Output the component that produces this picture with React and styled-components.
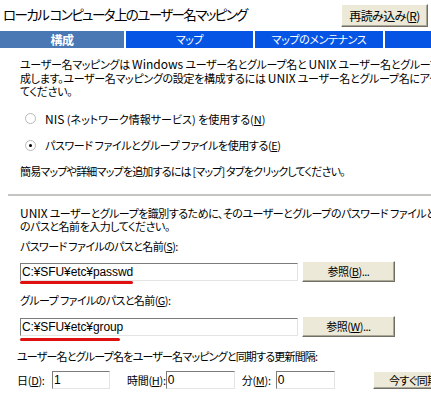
import React from "react";
import styled, { createGlobalStyle } from "styled-components";

const Global = createGlobalStyle`
  html, body { margin: 0; padding: 0; background: #fff; overflow: hidden; }
  body {
    font-family: "Noto Sans CJK JP", "Noto Sans", sans-serif;
    font-size: 11px;
    color: #000;
    font-feature-settings: "palt";
  }
  u { text-decoration: underline; text-underline-offset: 1px; }
`;

const Page = styled.div`
  width: 431px;
  height: 395px;
  overflow: hidden;
`;

const Header = styled.div`
  display: flex;
  align-items: center;
  justify-content: space-between;
  height: 31px;
  padding: 0 3px 0 3px;
  box-sizing: border-box;
`;

const Title = styled.div`
  font-size: 13.5px;
  line-height: 18px;
  letter-spacing: -1.6px;
  white-space: nowrap;
  margin-top: -3px;
`;

const Button = styled.button`
  font-family: inherit;
  font-feature-settings: "palt";
  font-size: ${(p) => p.$size || 11}px;
  letter-spacing: ${(p) => p.$ls ?? -0.5}px;
  color: #000;
  background: #ece9d8;
  border: 1px solid;
  border-color: #fff #716f64 #716f64 #fff;
  box-shadow: inset -1px -1px 0 #aca899;
  padding: 0;
  width: ${(p) => p.$w}px;
  height: ${(p) => p.$h}px;
  flex: 0 0 auto;
  line-height: 1;
  white-space: nowrap;
  display: flex;
  align-items: center;
  justify-content: center;
`;

const TabBar = styled.div`
  display: flex;
  gap: 2px;
  height: 17px;
`;

const Tab = styled.div`
  flex: 0 0 ${(p) => p.$w}px;
  background: ${(p) => (p.$active ? "#4a78b4" : "#0654e4")};
  color: #fff;
  font-weight: ${(p) => (p.$active ? 700 : 400)};
  font-size: ${(p) => (p.$active ? 12 : 11)}px;
  letter-spacing: -0.4px;
  line-height: 17px;
  text-align: center;
  white-space: nowrap;
`;

const Section = styled.div`
  padding-left: ${(p) => p.$pl ?? 20}px;
`;

const Para = styled.div`
  margin-top: ${(p) => p.$mt || 0}px;
  line-height: 13px;
  white-space: nowrap;
  letter-spacing: ${(p) => p.$ls ?? -0.6}px;
`;

const Lat = styled.span`
  font-size: 12px;
  letter-spacing: 0;
`;

const RadioRow = styled.div`
  display: flex;
  align-items: center;
  gap: 9px;
  height: 16px;
  margin-top: ${(p) => p.$mt || 0}px;
  padding-left: 5px;
  white-space: nowrap;
  letter-spacing: ${(p) => p.$ls ?? -0.4}px;
`;

const RadioDot = styled.span`
  width: 9px;
  height: 9px;
  border-radius: 50%;
  border: 1px solid #b9b9b9;
  background: #fff;
  position: relative;
  flex: 0 0 auto;
  &::after {
    content: "";
    display: ${(p) => (p.$checked ? "block" : "none")};
    position: absolute;
    left: 3px;
    top: 3px;
    width: 3px;
    height: 3px;
    border-radius: 50%;
    background: #000;
  }
`;

const Separator = styled.div`
  margin: 16px 0 0 8px;
  height: 2px;
  background: #c4c4c0;
`;

const FieldRow = styled.div`
  display: flex;
  align-items: center;
  gap: 4px;
  margin-top: ${(p) => p.$mt || 0}px;
  height: 21px;
`;

const InputWrap = styled.div`
  position: relative;
  flex: 0 0 auto;
`;

const TextBox = styled.div`
  flex: 0 0 auto;
  width: ${(p) => p.$w}px;
  height: ${(p) => p.$h || 18}px;
  box-sizing: border-box;
  background: #fff;
  border: 1px solid;
  border-color: #7b7b7b #e4e4e4 #e4e4e4 #7b7b7b;
  font-family: "Liberation Sans", "Noto Sans CJK JP", sans-serif;
  font-size: 12px;
  line-height: 16px;
  padding-left: 1px;
  white-space: nowrap;
  overflow: hidden;
  letter-spacing: -0.1px;
`;

const Marker = styled.div`
  position: absolute;
  left: 0;
  top: ${(p) => p.$top}px;
  width: ${(p) => p.$w}px;
  height: 3px;
  border-radius: 2px;
  background: #e01010;
`;

const IntervalRow = styled.div`
  display: flex;
  align-items: center;
  margin-top: 8px;
  height: 18px;
  white-space: nowrap;
`;

const Label = styled.span`
  flex: 0 0 ${(p) => p.$w}px;
  letter-spacing: -0.3px;
`;

const Gap = styled.span`
  flex: 0 0 ${(p) => p.$w}px;
`;

export default function App() {
  return (
    <Page>
      <Global />
      <Header>
        <Title>ローカル コンピュータ上のユーザー名マッピング</Title>
        <Button $w={87} $h={23} $size={12} $ls={-0.6}>
          再読み込み(<u>R</u>)
        </Button>
      </Header>
      <TabBar>
        <Tab $w={124} $active>構成</Tab>
        <Tab $w={127}>マップ</Tab>
        <Tab $w={128}>マップのメンテナンス</Tab>
        <Tab $w={60}></Tab>
      </TabBar>

      <Section>
        <Para $mt={9} $ls={-0.3}>
          ユーザー名マッピングは <Lat>Windows</Lat> ユーザー名とグループ名と <Lat>UNIX</Lat> ユーザー名とグループ名を関連付けるマップを作
          <br />
          成します。ユーザー名マッピングの設定を構成するには <Lat>UNIX</Lat> ユーザー名とグループ名にアクセスする方法を指定し
          <br />
          てください。
        </Para>
        <RadioRow $mt={12} $ls={0}>
          <RadioDot />
          <span>
            <Lat>NIS</Lat> (ネットワーク情報サービス) を使用する(<u>N</u>)
          </span>
        </RadioRow>
        <RadioRow $mt={11}>
          <RadioDot $checked />
          <span>
            パスワード ファイルとグループ ファイルを使用する(<u>E</u>)
          </span>
        </RadioRow>
        <Para $mt={12} $ls={-0.8}>
          簡易マップや詳細マップを追加するには [マップ] タブをクリックしてください。
        </Para>
      </Section>

      <Separator />

      <Section>
        <Para $mt={10} $ls={-0.5}>
          <Lat>UNIX</Lat> ユーザーとグループを識別するために、そのユーザーとグループのパスワード ファイルとグループ ファイル
          <br />
          のパスと名前を入力してください。
        </Para>
        <Para $mt={7}>
          パスワード ファイルのパスと名前(<u>S</u>):
        </Para>
        <FieldRow $mt={8}>
          <InputWrap>
            <TextBox $w={278}>C:¥SFU¥etc¥passwd</TextBox>
            <Marker $top={18} $w={113} />
          </InputWrap>
          <Button $w={93} $h={21}>
            参照(<u>B</u>)...
          </Button>
        </FieldRow>
        <Para $mt={12}>
          グループ ファイルのパスと名前(<u>G</u>):
        </Para>
        <FieldRow $mt={9}>
          <InputWrap>
            <TextBox $w={278}>C:¥SFU¥etc¥group</TextBox>
            <Marker $top={20} $w={100} />
          </InputWrap>
          <Button $w={93} $h={21}>
            参照(<u>W</u>)...
          </Button>
        </FieldRow>
      </Section>

      <Section $pl={17}>
        <Para $mt={13} $ls={-0.8}>ユーザー名とグループ名をユーザー名マッピングと同期する更新間隔:</Para>
        <IntervalRow>
          <Label $w={35}>
            日(<u>D</u>):
          </Label>
          <TextBox $w={58}>1</TextBox>
          <Gap $w={17} />
          <Label $w={36}>
            時間(<u>H</u>):
          </Label>
          <TextBox $w={69}>0</TextBox>
          <Gap $w={7} />
          <Label $w={34}>
            分(<u>M</u>):
          </Label>
          <TextBox $w={59}>0</TextBox>
          <Gap $w={38} />
          <Button $w={93} $h={18}>
            今すぐ同期(<u>Y</u>)
          </Button>
        </IntervalRow>
      </Section>
    </Page>
  );
}
